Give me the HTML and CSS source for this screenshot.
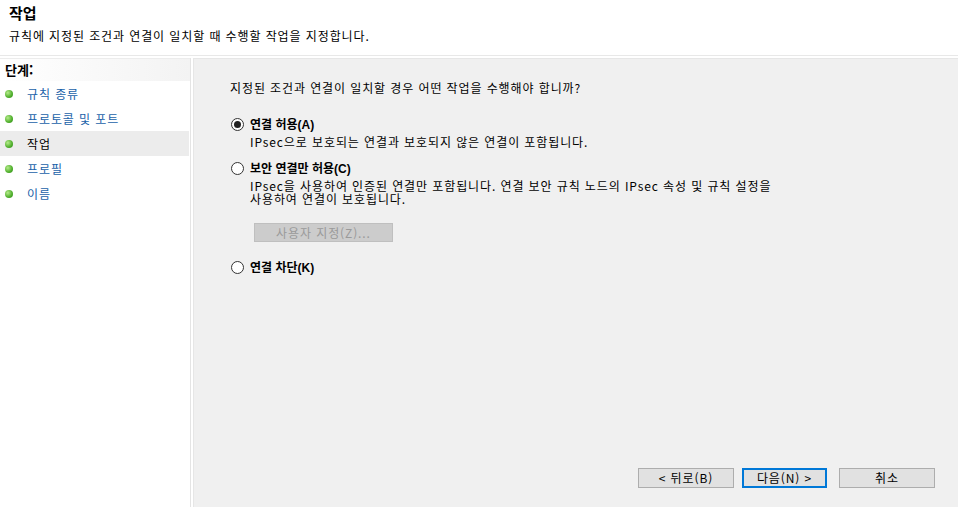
FILE: index.html
```html
<!DOCTYPE html>
<html lang="ko">
<head>
    <meta charset="UTF-8">
    <title>작업</title>
    <link rel="stylesheet" href="styles.css">
</head>
<body>
<div class="head">
    <h1 class="title">작업</h1>
    <p class="desc">규칙에 지정된 조건과 연결이 일치할 때 수행할 작업을 지정합니다.</p>
</div>
<div class="main">
    <div class="steps">
        <div class="steps-title">단계:</div>
        <ul>
            <li><span class="dot"></span><a href="#">규칙 종류</a></li>
            <li><span class="dot"></span><a href="#">프로토콜 및 포트</a></li>
            <li class="current"><span class="dot"></span><a href="#">작업</a></li>
            <li><span class="dot"></span><a href="#">프로필</a></li>
            <li><span class="dot"></span><a href="#">이름</a></li>
        </ul>
    </div>
    <div class="panel">
        <p class="question">지정된 조건과 연결이 일치할 경우 어떤 작업을 수행해야 합니까?</p>
        <div class="option first">
            <label class="radio"><span class="circle checked"></span><b>연결 허용<i>(A)</i></b></label>
            <p class="note">IPsec으로 보호되는 연결과 보호되지 않은 연결이 포함됩니다.</p>
        </div>
        <div class="option second">
            <label class="radio"><span class="circle"></span><b>보안 연결만 허용<i>(C)</i></b></label>
            <p class="note">IPsec을 사용하여 인증된 연결만 포함됩니다. 연결 보안 규칙 노드의 IPsec 속성 및 규칙 설정을</p>
            <p class="note next">사용하여 연결이 보호됩니다.</p>
            <button class="custom" disabled>사용자 지정(Z)...</button>
        </div>
        <div class="option third">
            <label class="radio"><span class="circle"></span><b>연결 차단<i>(K)</i></b></label>
        </div>
        <div class="buttons">
            <button class="btn">&lt; 뒤로(B)</button>
            <button class="btn default">다음(N) &gt;</button>
            <button class="btn cancel">취소</button>
        </div>
    </div>
</div>
</body>
</html>
```

FILE: styles.css
```css
*{
    margin: 0;
    padding: 0;
    box-sizing: border-box;
}
body{
    width: 958px;
    height: 507px;
    font-family: "Noto Sans CJK KR", "Liberation Sans", sans-serif;
    font-size: 12px;
    letter-spacing: 0.9px;
    color: #000;
    background: #fff;
    display: flex;
    flex-direction: column;
    overflow: hidden;
}
/*上方标题*/
.head{
    height: 56px;
    padding: 3px 0 0 9px;
    border-bottom: 1px solid #e8e8e8;
}
.title{
    font-size: 15px;
    font-weight: bold;
    line-height: 20px;
    letter-spacing: 0;
}
.desc{
    margin-top: 4px;
    line-height: 17px;
}
.main{
    flex: 1;
    display: flex;
    padding-top: 2px;
}
/*左侧步骤*/
.steps{
    width: 191px;
    border-right: 1px solid #e4e4e4;
    background: #fff;
}
.steps-title{
    height: 23px;
    line-height: 21px;
    padding-left: 5px;
    font-size: 13px;
    font-weight: bold;
    letter-spacing: 0;
    background: linear-gradient(to right, #fff, #f3f3f3);
    border-top: 1px solid #ececec;
}
.steps ul{
    list-style: none;
    padding-right: 1px;
}
.steps li{
    height: 25px;
    display: flex;
    align-items: center;
}
.steps li.current{
    background: #ececec;
}
.steps a{
    color: #1a62a9;
    text-decoration: none;
}
.steps li.current a{
    color: #000;
}
.dot{
    width: 8px;
    height: 8px;
    border-radius: 50%;
    background: radial-gradient(circle at 35% 35%, #b6ec8a, #4fae2c 60%, #2f8a1a);
    margin: 0 14px 0 5px;
}
/*右侧内容*/
.panel{
    flex: 1;
    margin-left: 2px;
    background: #f0f0f0;
    border-left: 1px solid #e6e6e6;
    border-top: 1px solid #e6e6e6;
    padding: 21px 0 0 36px;
    display: flex;
    flex-direction: column;
}
.question{
    line-height: 16px;
}
.option.first{
    margin-top: 20px;
}
.option.second{
    margin-top: 12px;
}
.option.third{
    margin-top: 17px;
}
.radio{
    display: flex;
    align-items: center;
    line-height: 16px;
    letter-spacing: 0;
}
.radio b{
    font-weight: bold;
}
.radio i{
    font-style: normal;
    font-family: "Liberation Sans", sans-serif;
}
.circle{
    width: 13px;
    height: 13px;
    border: 1px solid #333;
    border-radius: 50%;
    background: #fff;
    margin: 0 6px 0 1px;
    position: relative;
}
.circle.checked::after{
    content: "";
    position: absolute;
    left: 2px;
    top: 2px;
    width: 7px;
    height: 7px;
    border-radius: 50%;
    background: #222;
}
.note{
    margin-left: 20px;
    line-height: 13px;
    margin-top: 2px;
}
.second .note.next{
    margin-top: 0;
}
.custom{
    margin: 18px 0 0 24px;
    width: 139px;
    height: 19px;
    border: 1px solid #bfbfbf;
    background: #cccccc;
    color: #9a9a9a;
    font-family: inherit;
    font-size: 12px;
    letter-spacing: 0.9px;
    line-height: 15px;
}
.buttons{
    margin-top: auto;
    margin-bottom: 19px;
    display: flex;
    gap: 8px;
    padding-left: 408px;
}
.btn{
    width: 96px;
    height: 20px;
    border: 1px solid #adadad;
    background: #e1e1e1;
    font-family: inherit;
    font-size: 12px;
    letter-spacing: 0.9px;
    line-height: 16px;
    color: #000;
}
.btn.default{
    width: 85px;
    border: 2px solid #0078d7;
}
.btn.cancel{
    margin-left: 4px;
}
```
